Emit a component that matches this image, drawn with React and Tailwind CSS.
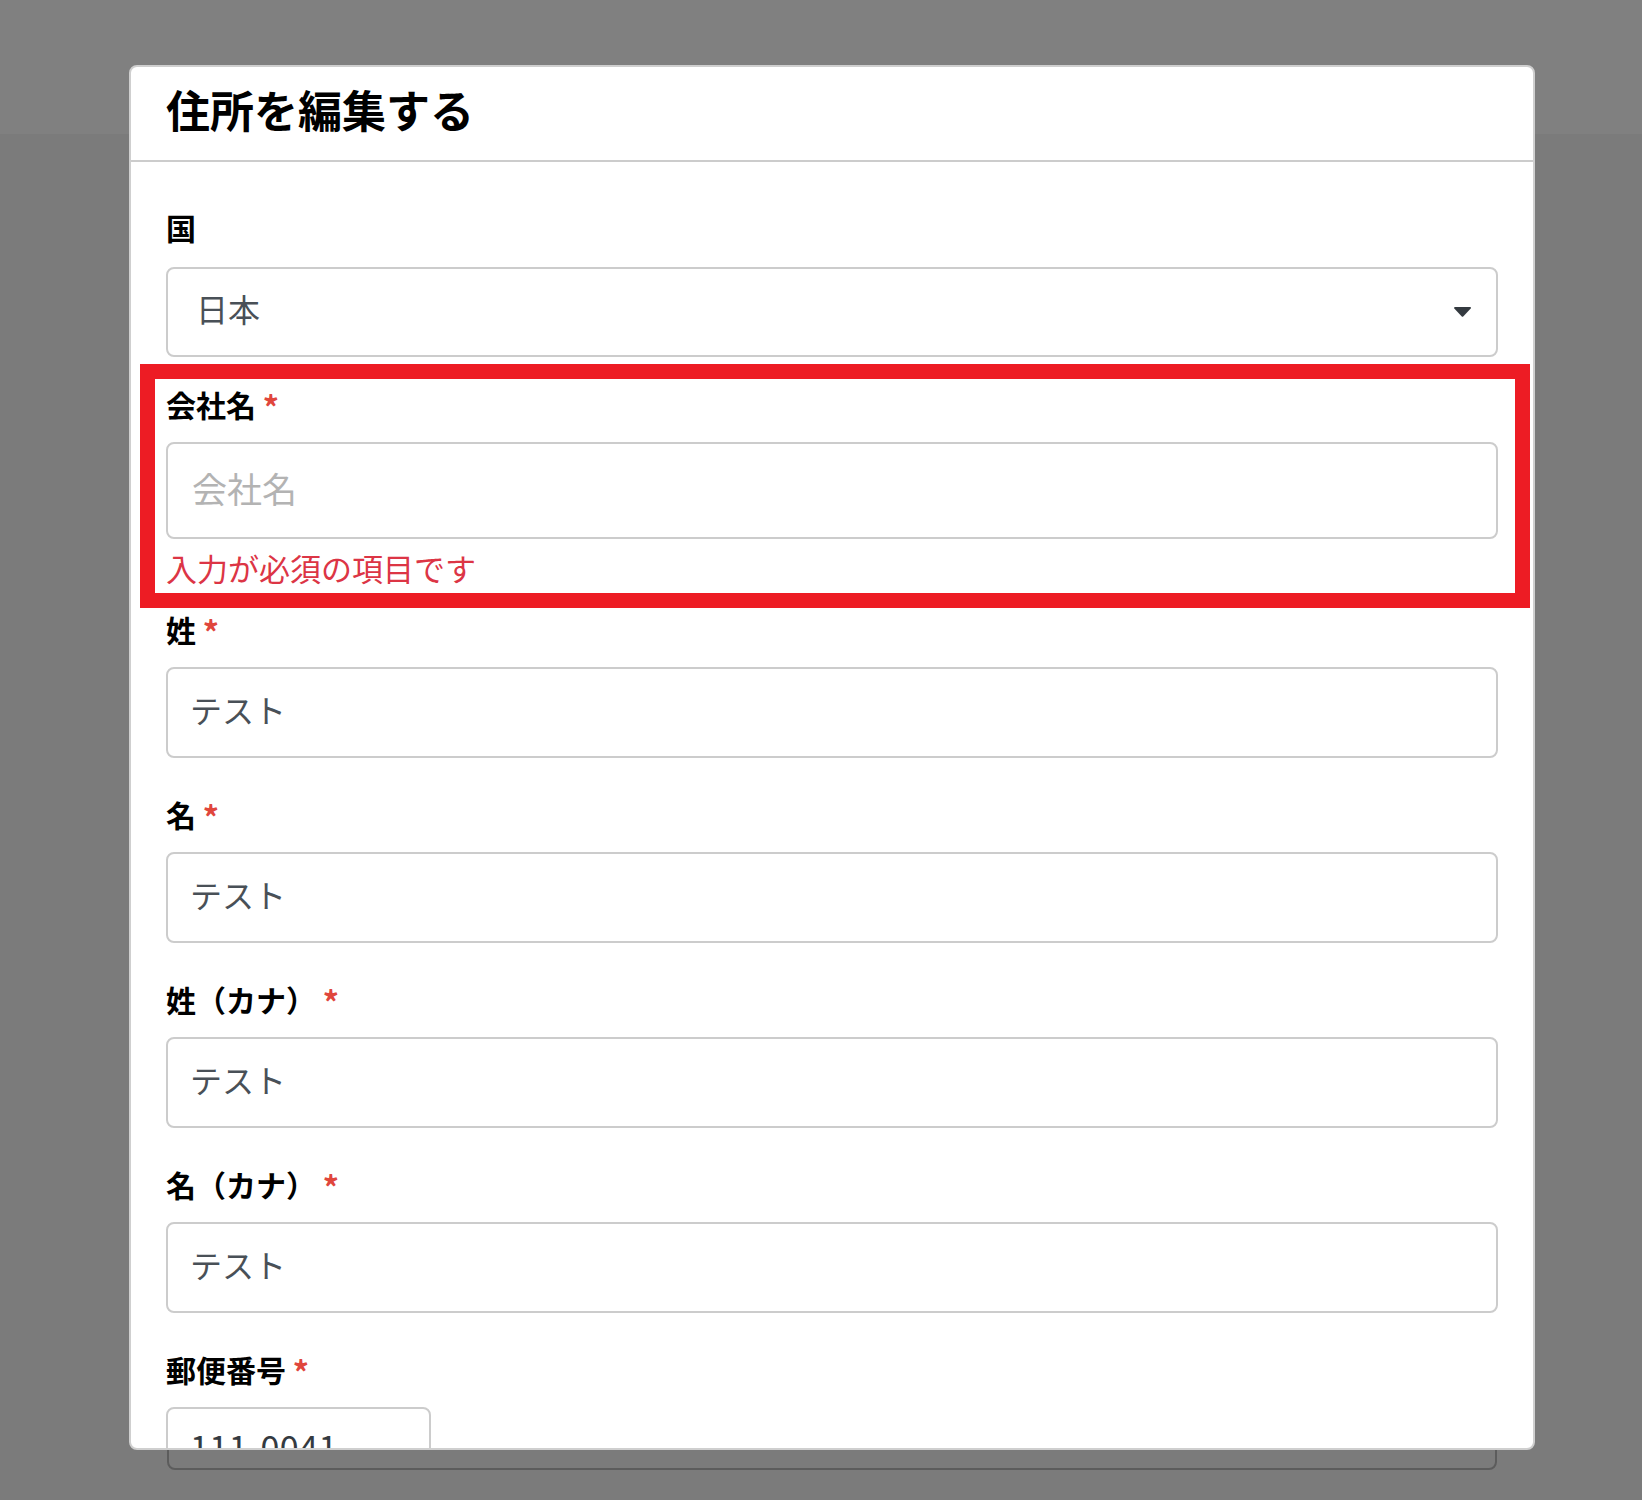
const font = "font-['Noto_Sans_CJK_JP','Noto_Sans',sans-serif]"

function Label({ children, required }) {
  return (
    <div className="h-[45px] text-[30px] leading-[41px] font-bold text-black whitespace-nowrap">
      {children}
      {required && (
        <>
          {' '}
          <span className="inline-block translate-y-[3px] text-[32px] text-[#e0463c]">*</span>
        </>
      )}
    </div>
  )
}

function TextField({ label, value, className = '' }) {
  return (
    <div className={className}>
      <Label required>{label}</Label>
      <div className="mt-[14px] h-[91px] w-full rounded-[8px] border-2 border-[#cccccc] bg-white px-[22px] pb-[8px] flex items-center text-[32px] text-[#495057]">
        {value}
      </div>
    </div>
  )
}

export default function App() {
  return (
    <div className={`relative h-[1500px] overflow-hidden bg-[#7b7b7b] ${font}`}>
      {/* page behind the overlay */}
      <div className="h-[134px] bg-[#808080]" />
      <div className="ml-[167px] mt-[1236px] h-[100px] w-[1330px] rounded-[8px] border-2 border-[#5c5c5c]" />

      {/* modal */}
      <div className="absolute left-[129px] top-[65px] w-[1406px] h-[1385px] overflow-hidden rounded-[8px] border-2 border-[#cfcfcf] bg-white">
        <div className="h-[95px] border-b-2 border-[#cccccc] pl-[35px] pb-[10px] flex items-center">
          <h2 className="text-[44px] leading-none font-bold text-black">住所を編集する</h2>
        </div>

        <div className="px-[35px] pt-[45px]">
          <Label>国</Label>
          <div className="mt-[15px] h-[90px] w-full rounded-[8px] border-2 border-[#cccccc] pl-[28px] pr-[25px] pb-[8px] flex items-center justify-between text-[32px] text-[#495057]">
            <span>日本</span>
            <svg width="17" height="10" viewBox="0 0 17 10" className="mt-[8px] text-[#343a40]">
              <path d="M1 0h15c.8 0 1.2.9.7 1.5L9.2 9.4a1 1 0 0 1-1.4 0L.3 1.5C-.2.9.2 0 1 0z" fill="currentColor" />
            </svg>
          </div>

          <div className="relative mt-[26px]">
            <Label required>会社名</Label>
            <input
              className="mt-[14px] h-[97px] w-full rounded-[8px] border-2 border-[#cccccc] bg-white px-[24px] pb-[6px] text-[35px] text-[#495057] outline-none placeholder:text-[#b3b3b3]"
              placeholder="会社名"
              readOnly
            />
            <p className="mt-[8px] h-[45px] text-[31px] leading-[41px] text-[#dc3545]">入力が必須の項目です</p>
            {/* annotation frame */}
            <div className="pointer-events-none absolute -top-[19px] -bottom-[16px] -left-[26px] -right-[32px] border-[15px] border-[#ed1c24]" />
          </div>

          <TextField label="姓" value="テスト" className="mt-[16px]" />
          <TextField label="名" value="テスト" className="mt-[35px]" />
          <TextField label="姓（カナ）" value="テスト" className="mt-[35px]" />
          <TextField label="名（カナ）" value="テスト" className="mt-[35px]" />

          <div className="mt-[35px]">
            <Label required>郵便番号</Label>
            <div className="mt-[14px] h-[91px] w-[265px] rounded-[8px] border-2 border-[#cccccc] px-[22px] pb-[14px] flex items-center text-[34px] tracking-[0.5px] text-[#343a40]">
              111-0041
            </div>
          </div>
        </div>
      </div>
    </div>
  )
}
